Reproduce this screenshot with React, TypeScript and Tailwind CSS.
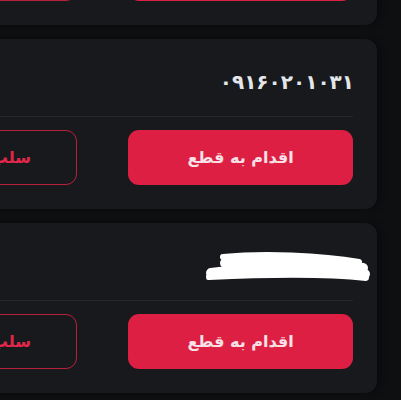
const cards = [
  { id: 1, phone: "۰۹۱۲۴۵۶۷۸۹۰", hidden: false },
  { id: 2, phone: "۰۹۱۶۰۲۰۱۰۳۱", hidden: false },
  { id: 3, phone: "", hidden: true },
];

function Scribble() {
  return (
    <svg width="170" height="36" viewBox="0 0 170 36" className="mt-[3px] mr-[-18px]">
      <g fill="none" stroke="#ffffff" strokeLinecap="round" strokeLinejoin="round">
        <path d="M22 7 C60 3 120 5 158 12" strokeWidth="6" />
        <path d="M24 13 C70 9 120 11 162 18" strokeWidth="10" />
        <path d="M10 23 C55 17 115 17 164 24" strokeWidth="10" />
        <path d="M8 27 C50 25 120 23 165 28" strokeWidth="6" />
        <path d="M30 18 L150 19" strokeWidth="12" />
      </g>
    </svg>
  );
}

function LineCard({ phone, hidden }: { phone: string; hidden: boolean }) {
  return (
    <div
      dir="rtl"
      className="h-[170px] w-[527px] shrink-0 rounded-xl bg-[#17191d] p-6 flex flex-col shadow-[3px_0_6px_rgba(0,0,0,0.35)]"
    >
      {/* number row */}
      <div className="h-[53px] flex items-start">
        {hidden ? (
          <Scribble />
        ) : (
          <span className="pt-[7px] text-[20px] leading-[24px] font-bold text-[#e4e6ea] mr-[-1px]">
            {phone}
          </span>
        )}
      </div>
      <div className="h-px bg-[#23262b]" />
      {/* actions */}
      <div className="mt-[13px] flex gap-[51px]">
        <button className="h-[55px] w-[225px] shrink-0 rounded-[11px] bg-[#dc1f43] text-[16px] font-bold text-[#f7e1e6] flex items-center justify-center">
          اقدام به قطع
        </button>
        <button className="h-[55px] w-[204px] shrink-0 rounded-[11px] border border-[#b8203d] text-[16px] font-bold text-[#e0274a] flex items-center justify-start pr-[45px]">
          سلب دسترسی
        </button>
      </div>
    </div>
  );
}

export default function App() {
  return (
    <div
      className="w-[401px] h-[400px] overflow-hidden bg-[#0e0f11]"
      style={{ fontFamily: '"DejaVu Sans", sans-serif' }}
    >
      <div className="ml-[-150px] mt-[-145px] flex flex-col gap-[14px]">
        {cards.map((c) => (
          <LineCard key={c.id} phone={c.phone} hidden={c.hidden} />
        ))}
      </div>
    </div>
  );
}
